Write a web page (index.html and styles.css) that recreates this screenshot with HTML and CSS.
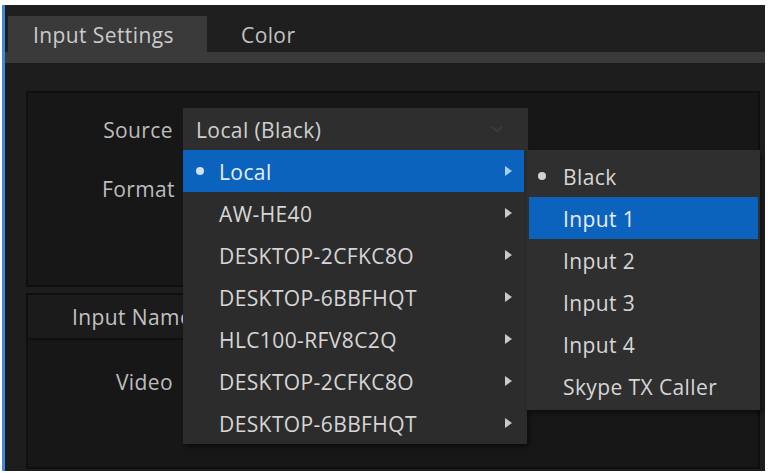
FILE: index.html
```html
<!DOCTYPE html>
<html>
<head>
<meta charset="utf-8">
<link rel="stylesheet" href="styles.css">
</head>
<body>
<div class="frame">
  <div class="tabbar">
    <div class="tabs">
      <div class="tab active">Input Settings</div>
      <div class="tab">Color</div>
    </div>
    <div class="strip"></div>
  </div>
  <div class="content">
    <div class="group g1">
      <div class="row">
        <div class="label">Source</div>
        <div class="select-wrap">
          <div class="select">
            <span>Local (Black)</span>
            <svg class="chev" width="12" height="7" viewBox="0 0 12 7"><path d="M1 1 L6 5.5 L11 1" fill="none" stroke="#404040" stroke-width="1.5"/></svg>
          </div>
          <div class="menu">
            <div class="item hl"><span class="mark"><i class="dot"></i></span><span class="txt">Local</span><i class="arrow"></i></div>
            <div class="item"><span class="mark"></span><span class="txt">AW-HE40</span><i class="arrow"></i></div>
            <div class="item"><span class="mark"></span><span class="txt">DESKTOP-2CFKC8O</span><i class="arrow"></i></div>
            <div class="item"><span class="mark"></span><span class="txt">DESKTOP-6BBFHQT</span><i class="arrow"></i></div>
            <div class="item"><span class="mark"></span><span class="txt">HLC100-RFV8C2Q</span><i class="arrow"></i></div>
            <div class="item"><span class="mark"></span><span class="txt">DESKTOP-2CFKC8O</span><i class="arrow"></i></div>
            <div class="item"><span class="mark"></span><span class="txt">DESKTOP-6BBFHQT</span><i class="arrow"></i></div>
            <div class="submenu">
              <div class="item"><span class="mark"><i class="dot"></i></span><span class="txt">Black</span></div>
              <div class="item hl"><span class="mark"></span><span class="txt">Input 1</span></div>
              <div class="item"><span class="mark"></span><span class="txt">Input 2</span></div>
              <div class="item"><span class="mark"></span><span class="txt">Input 3</span></div>
              <div class="item"><span class="mark"></span><span class="txt">Input 4</span></div>
              <div class="item"><span class="mark"></span><span class="txt">Skype TX Caller</span></div>
            </div>
          </div>
        </div>
      </div>
      <div class="row row2">
        <div class="label">Format</div>
      </div>
    </div>
    <div class="group g2">
      <div class="ghead">Input Name</div>
      <div class="row row3">
        <div class="label">Video</div>
      </div>
    </div>
  </div>
</div>
</body>
</html>
```

FILE: styles.css
```css
html, body {
  margin: 0;
  padding: 0;
  background: #ffffff;
  width: 770px;
  height: 473px;
  overflow: hidden;
}
body {
  font-family: "Open Sans", "Noto Sans", sans-serif;
  font-size: 21px;
  font-weight: 500;
  letter-spacing: 0.4px;
  color: #c8c8c8;
}
.frame {
  margin: 5px 5px 0 2px;
  height: 466px;
  border-left: 3px solid #3f8bd4;
  background: #1e1e1e;
  display: flex;
  flex-direction: column;
}
.tabbar {
  padding-top: 11px;
  background: #1f1f1f;
}
.tabs {
  display: flex;
  height: 36px;
  padding-left: 3px;
}
.tab {
  display: flex;
  align-items: center;
  padding: 1px 0 0 34px;
  color: #c2c2c2;
}
.tab.active {
  width: 199px;
  box-sizing: border-box;
  padding-left: 25px;
  background: #3a3a3a;
  color: #cbcbcb;
}
.strip {
  height: 11px;
  background: #3a3a3a;
}
.content {
  flex: 1;
  display: flex;
  flex-direction: column;
  padding: 28px 5px 2px 21px;
  background: #1d1d1d;
}
.group {
  border: 2px solid #0f0f0f;
  background: #171717;
}
.g1 {
  padding-top: 15px;
  height: 177px;
}
.g2 {
  margin-top: 6px;
  flex: 1;
}
.row {
  display: flex;
  align-items: center;
  height: 42px;
}
.row2 {
  margin-top: 17px;
}
.row3 {
  margin-top: 20px;
}
.label {
  width: 145px;
  text-align: right;
  color: #bdbdbd;
  padding-top: 1px;
}
.row2 .label {
  width: 147px;
}
.ghead {
  height: 43px;
  display: flex;
  align-items: center;
  padding-left: 44px;
  background: #1b1b1b;
  border-bottom: 2px solid #101010;
  color: #c2c2c2;
}
.select-wrap {
  position: relative;
  margin-left: 10px;
}
.select {
  width: 345px;
  height: 42px;
  box-sizing: border-box;
  background: #2e2e2e;
  display: flex;
  align-items: center;
  padding: 1px 0 0 13px;
  color: #d0d0d0;
}
.chev {
  margin-left: auto;
  margin-right: 25px;
}
.menu {
  position: absolute;
  left: 0;
  top: 42px;
  width: 344px;
  box-sizing: border-box;
  padding-right: 3px;
  background: #2c2c2c;
  box-shadow: 2px 3px 4px rgba(0,0,0,0.45);
  z-index: 2;
}
.item {
  height: 42px;
  display: flex;
  align-items: center;
  color: #d6d6d6;
}
.item .txt {
  padding-top: 2px;
}
.item.hl {
  background: #0b63be;
  color: #e6eef8;
}
.mark {
  width: 36px;
  flex: none;
  display: flex;
  align-items: center;
  padding-left: 13px;
  box-sizing: border-box;
  height: 100%;
}
.dot {
  width: 8px;
  height: 8px;
  border-radius: 50%;
  background: #d2d2d2;
}
.item.hl .dot {
  background: #cfe0f4;
}
.arrow {
  margin-left: auto;
  margin-right: 12px;
  width: 0;
  height: 0;
  border-left: 7px solid #c9c9c9;
  border-top: 5px solid transparent;
  border-bottom: 5px solid transparent;
}
.item.hl .arrow {
  border-left-color: #a9cdf0;
}
.submenu {
  position: absolute;
  left: 344px;
  top: 0;
  width: 233px;
  box-sizing: border-box;
  padding: 5px 2px 3px 2px;
  background: #2f2f2f;
  box-shadow: 2px 3px 4px rgba(0,0,0,0.45);
}
.submenu .mark {
  width: 34px;
  padding-left: 9px;
}
```
